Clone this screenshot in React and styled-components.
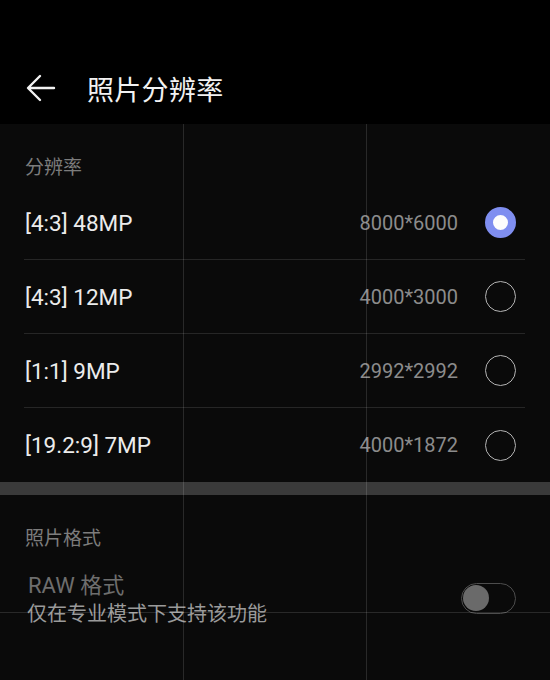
import React from 'react';
import styled, { createGlobalStyle } from 'styled-components';

const RESOLUTIONS = [
  { label: '[4:3] 48MP', size: '8000*6000', checked: true },
  { label: '[4:3] 12MP', size: '4000*3000' },
  { label: '[1:1] 9MP', size: '2992*2992' },
  { label: '[19.2:9] 7MP', size: '4000*1872' },
];

const App = () => {
  return (
    <Screen>
      <GlobalStyle />
      <Header>
        <BackButton aria-label="back">
          <svg width="32" height="32" viewBox="0 0 32 32" fill="none">
            <path d="M29 16H4M15 4L3 16l12 12" stroke="#f2f2f2" strokeWidth="2.4" strokeLinecap="round" strokeLinejoin="round" />
          </svg>
        </BackButton>
        <Title>照片分辨率</Title>
      </Header>

      <Body>
        <SectionLabel>分辨率</SectionLabel>
        <List>
          {RESOLUTIONS.map((r) => (
            <Row key={r.label}>
              <RowLabel>{r.label}</RowLabel>
              <RowValue>{r.size}</RowValue>
              <Radio $checked={r.checked} />
            </Row>
          ))}
        </List>
        <Band />

        <SectionLabel>照片格式</SectionLabel>
        <SwitchRow>
          <SwitchText>
            <SwitchTitle>RAW 格式</SwitchTitle>
            <SwitchHint>仅在专业模式下支持该功能</SwitchHint>
          </SwitchText>
          <Toggle>
            <Knob />
          </Toggle>
        </SwitchRow>

        <GridLineV style={{ left: 183 }} />
        <GridLineV style={{ left: 366 }} />
        <GridLineH style={{ top: 612 - 124 }} />
      </Body>
    </Screen>
  );
};

const GlobalStyle = createGlobalStyle`
  html, body {
    margin: 0;
    padding: 0;
    background: #0a0a0a;
  }
  * {
    box-sizing: border-box;
  }
`;

const Screen = styled.div`
  width: 550px;
  height: 680px;
  overflow: hidden;
  background: #0a0a0a;
  font-family: Roboto, "Noto Sans CJK SC", sans-serif;
  display: flex;
  flex-direction: column;
`;

const Header = styled.header`
  height: 124px;
  flex-shrink: 0;
  background: #000;
  display: flex;
  align-items: center;
  padding: 52px 0 0 25px;
`;

const BackButton = styled.div`
  width: 32px;
  height: 32px;
  display: flex;
  align-items: center;
  justify-content: center;
`;

const Title = styled.h1`
  margin: 0 0 0 30px;
  font-size: 27px;
  font-weight: 400;
  color: #f2f2f2;
  letter-spacing: 0.3px;
  font-family: "Noto Sans CJK SC", sans-serif;
`;

const Body = styled.main`
  position: relative;
  flex: 1;
  background: #0a0a0a;
`;

const SectionLabel = styled.div`
  padding: 29px 25px 0;
  height: 62px;
  font-size: 19px;
  color: #7c7c7c;
  font-family: "Noto Sans CJK SC", sans-serif;
  line-height: 26px;
`;

const List = styled.div`
  margin: 0 25px 0 24px;
`;

const Row = styled.div`
  height: 74px;
  display: flex;
  align-items: center;
  padding: 0 9px 0 1px;
  border-bottom: 1px solid #262626;

  &:last-child {
    border-bottom: none;
  }
`;

const RowLabel = styled.span`
  flex: 1;
  font-size: 22.5px;
  color: #ececec;
`;

const RowValue = styled.span`
  font-size: 20px;
  color: #8c8c8c;
  margin-right: 27px;
`;

const Radio = styled.span`
  width: 31px;
  height: 31px;
  border-radius: 50%;
  flex-shrink: 0;
  border: ${(p) => (p.$checked ? '8.5px solid #7f8ef0' : '1.6px solid #b4b4b4')};
  background: ${(p) => (p.$checked ? '#fdfdfd' : 'transparent')};
`;

const Band = styled.div`
  height: 13px;
  background: #3a3a3a;
`;

const SwitchRow = styled.div`
  display: flex;
  align-items: center;
  padding: 0 34px 0 28px;
  margin-top: 15px;
`;

const SwitchText = styled.div`
  flex: 1;
  display: flex;
  flex-direction: column;
  font-family: Roboto, "Noto Sans CJK SC", sans-serif;
`;

const SwitchTitle = styled.span`
  font-size: 22px;
  line-height: 28px;
  color: #6e6e6e;
`;

const SwitchHint = styled.span`
  margin-left: -1px;
  font-size: 20px;
  line-height: 28px;
  color: #9a9a9a;
`;

const Toggle = styled.div`
  width: 55px;
  height: 31px;
  border-radius: 16px;
  border: 1.5px solid #4d4d4d;
  display: flex;
  align-items: center;
  padding-left: 1px;
  margin-top: -4px;
`;

const Knob = styled.div`
  width: 26px;
  height: 26px;
  border-radius: 50%;
  background: #6a6a6a;
`;

const GridLineV = styled.div`
  position: absolute;
  top: 0;
  bottom: 0;
  width: 1px;
  background: rgba(255, 255, 255, 0.13);
  pointer-events: none;
`;

const GridLineH = styled.div`
  position: absolute;
  left: 0;
  right: 0;
  height: 1px;
  background: rgba(255, 255, 255, 0.13);
  pointer-events: none;
`;

export default App;
